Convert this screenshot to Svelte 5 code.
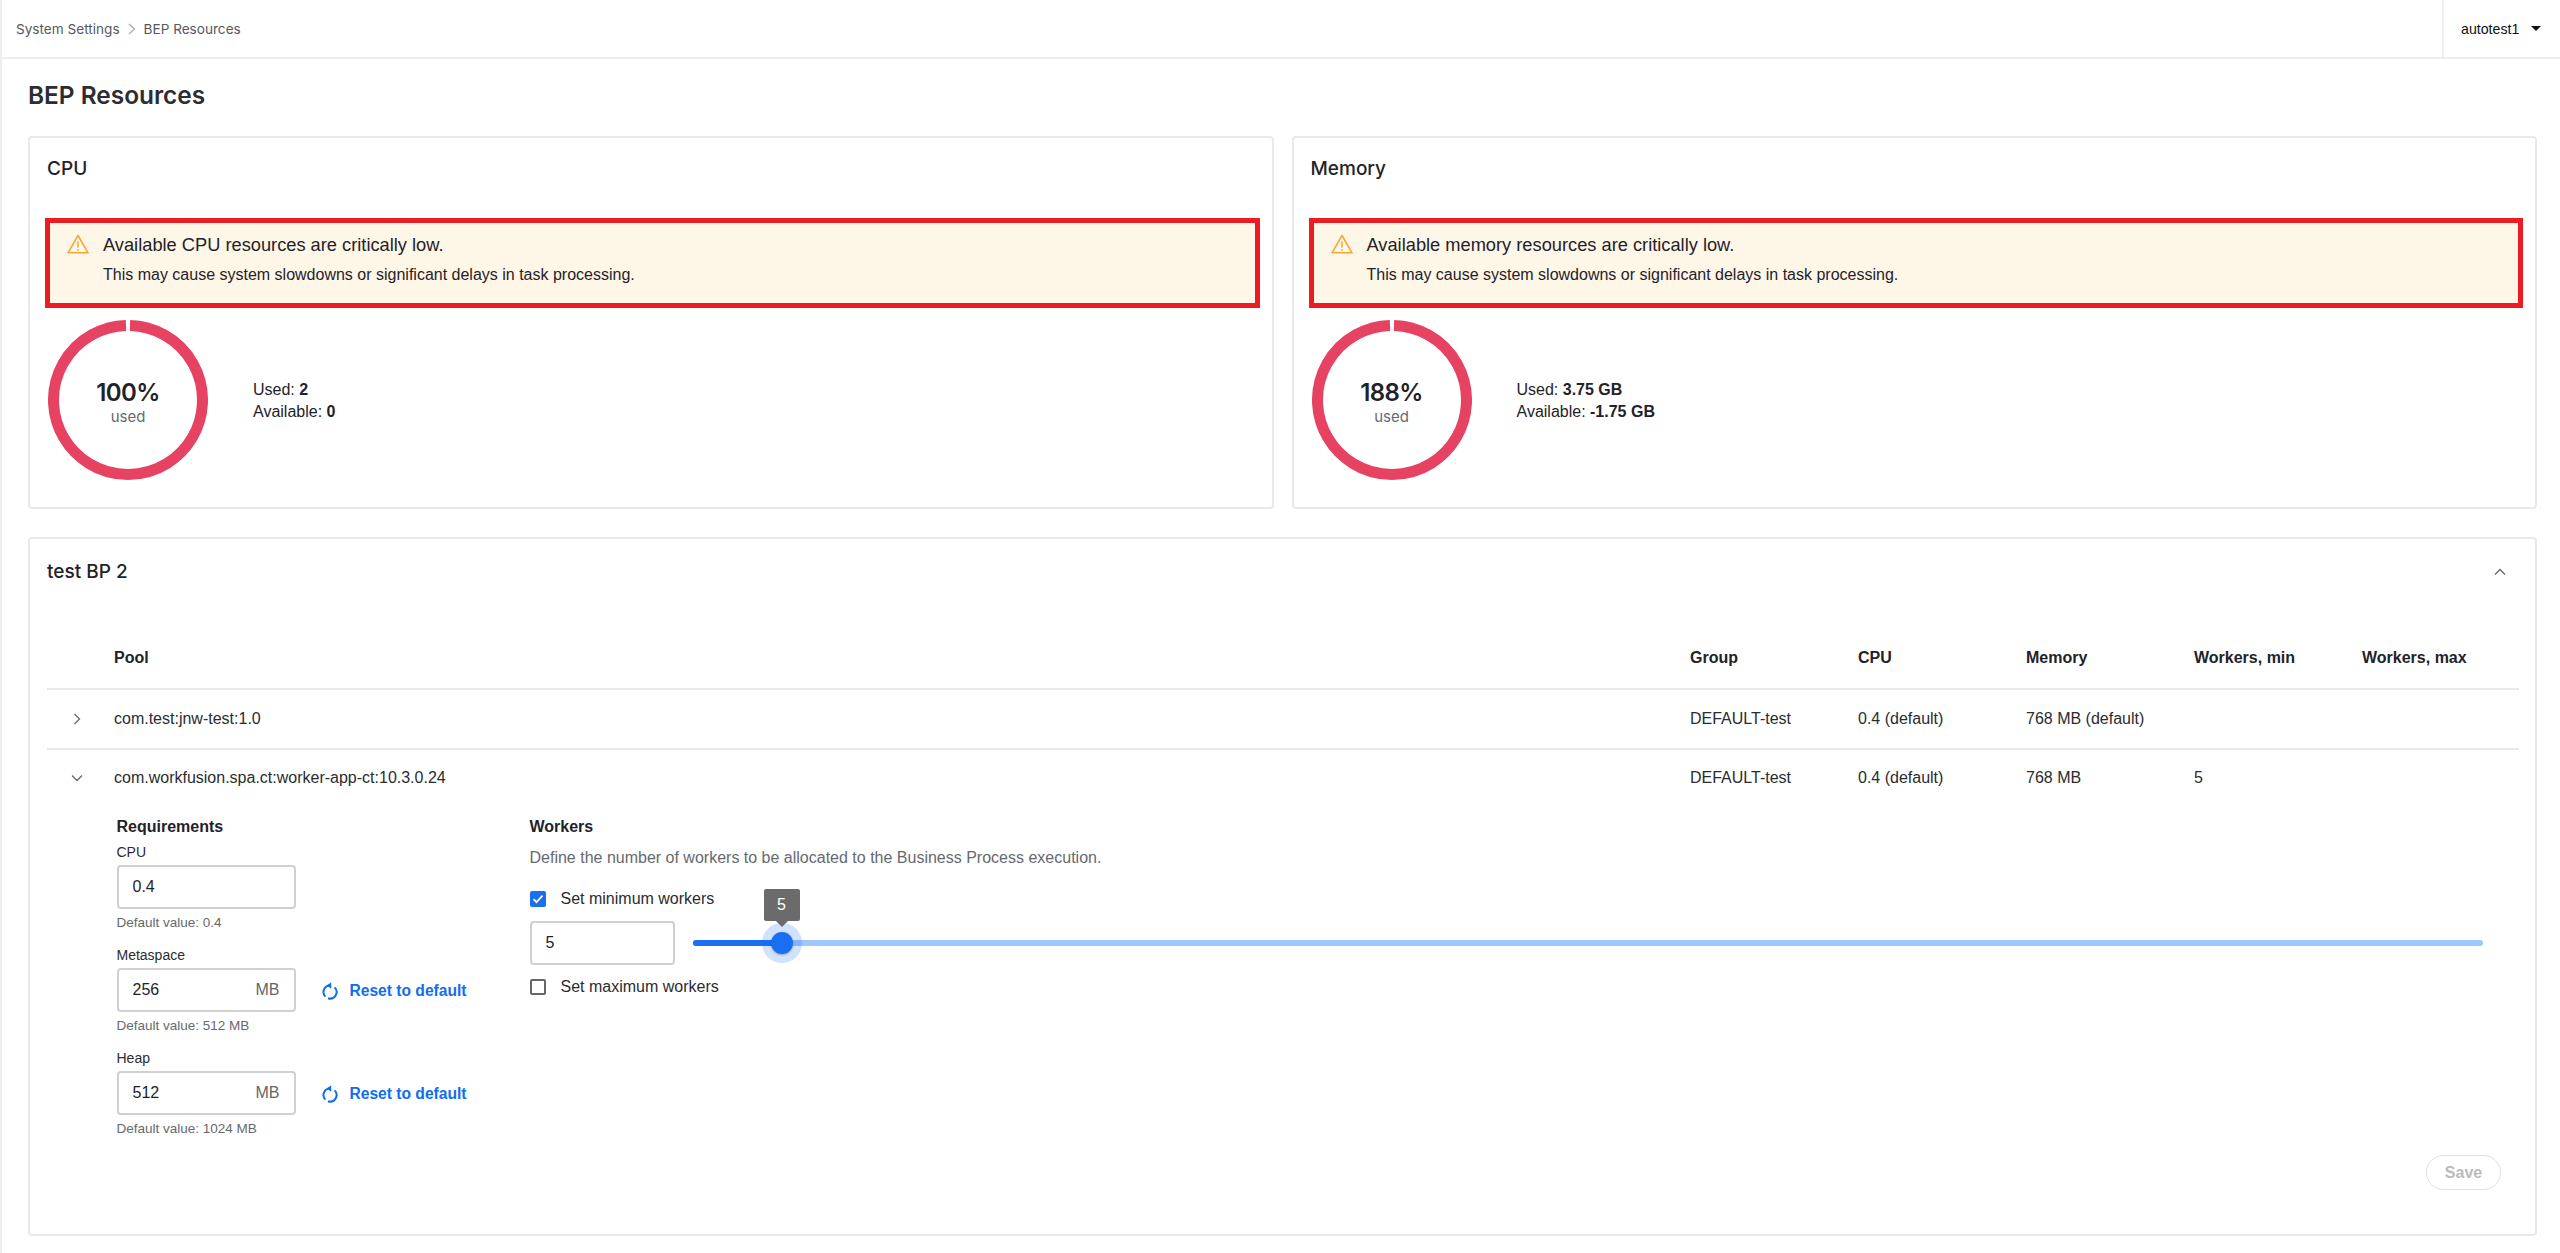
<script>
  const gauges = [
    { title: "CPU", word: "CPU", pct: "100%", used: "2", avail: "0" },
    { title: "Memory", word: "memory", pct: "188%", used: "3.75 GB", avail: "-1.75 GB" },
  ];
  const columns = ["Group", "CPU", "Memory", "Workers, min", "Workers, max"];
</script>

{#snippet resetIcon()}
  <svg width="16" height="22" viewBox="0 0 16 22">
    <path d="M8 5.5A6.5 6.5 0 0 0 3.4 16.6M6 18.2A6.5 6.5 0 0 0 12.6 7.4" fill="none" stroke="#0f6df0" stroke-width="2" />
    <path d="M9.2 2.2v6.6L4.8 5.5z" fill="#0f6df0" />
  </svg>
{/snippet}

<div class="page">
  <header class="topbar">
    <nav class="crumbs">
      <span>System Settings</span>
      <svg width="8" height="12" viewBox="0 0 8 12"><path d="M1 1l5.5 5-5.5 5" fill="none" stroke="#aaa" stroke-width="1.2" /></svg>
      <span>BEP Resources</span>
    </nav>
    <div class="user">
      <span>autotest1</span>
      <i class="caret"></i>
    </div>
  </header>

  <main>
    <h1>BEP Resources</h1>

    <div class="gauges">
      {#each gauges as g}
        <section class="card gauge">
          <h2>{g.title}</h2>
          <div class="alert">
            <svg class="warn" width="22" height="20" viewBox="0 0 22 20">
              <path d="M11 1.5L21 18.8H1z" fill="none" stroke="#f2a93b" stroke-width="1.6" stroke-linejoin="round" />
              <path d="M11 7.5v6M11 15v1.6" fill="none" stroke="#f2a93b" stroke-width="1.6" />
            </svg>
            <div>
              <p class="alert-title">Available {g.word} resources are critically low.</p>
              <p class="alert-text">This may cause system slowdowns or significant delays in task processing.</p>
            </div>
          </div>
          <div class="usage">
            <div class="ring">
              <svg width="160" height="160" viewBox="0 0 160 160">
                <path d="M82 5.5A74.5 74.5 0 1 1 78 5.5" fill="none" stroke="#e64261" stroke-width="11" />
              </svg>
              <div class="ring-label">
                <strong>{g.pct}</strong>
                <span>used</span>
              </div>
            </div>
            <div class="numbers">
              <div>Used: <b>{g.used}</b></div>
              <div>Available: <b>{g.avail}</b></div>
            </div>
          </div>
        </section>
      {/each}
    </div>

    <section class="card pool-card">
      <div class="pool-head">
        <h2>test BP 2</h2>
        <svg width="12" height="8" viewBox="0 0 12 8"><path d="M1 6.5l5-5 5 5" fill="none" stroke="#666" stroke-width="1.3" /></svg>
      </div>

      <div class="table">
        <div class="tr th">
          <span></span>
          <span>Pool</span>
          {#each columns as c}<span>{c}</span>{/each}
        </div>
        <div class="tr">
          <svg class="chev" width="8" height="12" viewBox="0 0 8 12"><path d="M1.5 1l5 5-5 5" fill="none" stroke="#666" stroke-width="1.3" /></svg>
          <span>com.test:jnw-test:1.0</span>
          <span>DEFAULT-test</span>
          <span>0.4 (default)</span>
          <span>768 MB (default)</span>
          <span></span>
          <span></span>
        </div>
        <div class="tr open">
          <svg class="chev" width="12" height="8" viewBox="0 0 12 8"><path d="M1 1.5l5 5 5-5" fill="none" stroke="#666" stroke-width="1.3" /></svg>
          <span>com.workfusion.spa.ct:worker-app-ct:10.3.0.24</span>
          <span>DEFAULT-test</span>
          <span>0.4 (default)</span>
          <span>768 MB</span>
          <span>5</span>
          <span></span>
        </div>

        <div class="details">
          <div class="requirements">
            <h3>Requirements</h3>
            <div class="field">
              <label for="cpu">CPU</label>
              <div class="input"><input id="cpu" value="0.4" /></div>
              <small>Default value: 0.4</small>
            </div>
            <div class="field">
              <label for="meta">Metaspace</label>
              <div class="with-reset">
                <div class="input"><input id="meta" value="256" /><span>MB</span></div>
                <button class="reset">
                  {@render resetIcon()}
                  Reset to default
                </button>
              </div>
              <small>Default value: 512 MB</small>
            </div>
            <div class="field">
              <label for="heap">Heap</label>
              <div class="with-reset">
                <div class="input"><input id="heap" value="512" /><span>MB</span></div>
                <button class="reset">
                  {@render resetIcon()}
                  Reset to default
                </button>
              </div>
              <small>Default value: 1024 MB</small>
            </div>
          </div>

          <div class="workers">
            <h3>Workers</h3>
            <p class="hint">Define the number of workers to be allocated to the Business Process execution.</p>
            <div class="check">
              <span class="box on">
                <svg width="16" height="16" viewBox="0 0 16 16"><path d="M3.5 8.2l3 3 6-6.5" fill="none" stroke="#fff" stroke-width="1.7" /></svg>
              </span>
              Set minimum workers
            </div>
            <div class="slider-row">
              <div class="input small"><input value="5" /></div>
              <div class="slider">
                <div class="fill"></div>
                <div class="halo"></div>
                <div class="thumb"></div>
                <div class="tip">5</div>
              </div>
            </div>
            <div class="check">
              <span class="box"></span>
              Set maximum workers
            </div>
          </div>
        </div>

        <div class="actions">
          <button class="save" disabled>Save</button>
        </div>
      </div>
    </section>
  </main>
</div>

<style>
  :global(body) {
    background: #fff;
    color: #1f2329;
    font-family: "Liberation Sans", Arial, sans-serif;
    font-size: 16px;
  }
  .page {
    border-left: 2px solid #eee;
    min-height: 1253px;
    box-sizing: border-box;
  }
  .topbar {
    height: 57px;
    border-bottom: 2px solid #eee;
    display: flex;
    justify-content: space-between;
    align-items: stretch;
  }
  .crumbs {
    display: flex;
    align-items: center;
    gap: 8px;
    padding-left: 14px;
    font-family: Inter, sans-serif;
    font-size: 13.6px;
    color: #55595f;
  }
  .user {
    width: 118px;
    border-left: 2px solid #eee;
    display: flex;
    align-items: center;
    padding-left: 17px;
    gap: 12px;
    font-size: 14.2px;
    color: #111;
    box-sizing: border-box;
  }
  .caret {
    border: 5px solid transparent;
    border-top-color: #111;
    border-bottom: 0;
  }
  main {
    padding: 0 23px 0 26px;
  }
  h1 {
    margin: 0;
    height: 77px;
    line-height: 72px;
    font-family: Inter, sans-serif;
    font-size: 24.4px;
    font-weight: 600;
    color: #2b2d31;
  }
  .card {
    border: 2px solid #e9e9e9;
    border-radius: 4px;
    box-sizing: border-box;
    background: #fff;
  }
  .gauges {
    display: grid;
    grid-template-columns: 1fr 1fr;
    gap: 18px;
  }
  .gauge {
    height: 373px;
    padding: 0 12px 0 15px;
  }
  h2 {
    margin: 0;
    font-family: Inter, sans-serif;
    font-size: 19px;
    font-weight: 500;
    color: #1f2329;
  }
  .gauge h2 {
    padding: 0 0 0 2px;
    height: 80px;
    line-height: 62px;
  }
  .alert {
    height: 90px;
    box-sizing: border-box;
    border: 5px solid #ed1c24;
    background: #fef6e7;
    display: flex;
    gap: 14px;
    padding: 11px 17px;
  }
  .warn {
    flex: none;
  }
  .alert p {
    margin: 0;
  }
  .alert-title {
    font-size: 18.25px;
    line-height: 22px;
  }
  .alert .alert-text {
    font-size: 16px;
    line-height: 20px;
    margin-top: 9px;
  }
  .usage {
    display: flex;
    gap: 45px;
    margin-top: 12px;
    padding-left: 3px;
  }
  .ring {
    position: relative;
    width: 160px;
    height: 160px;
  }
  .ring-label {
    position: absolute;
    left: 0;
    right: 0;
    top: 58px;
    display: flex;
    flex-direction: column;
    align-items: center;
  }
  .ring-label strong {
    font-family: Inter, sans-serif;
    font-size: 24px;
    font-weight: 600;
    line-height: 30px;
    letter-spacing: -0.6px;
  }
  .ring-label span {
    font-family: Inter, sans-serif;
    font-size: 15px;
    line-height: 18px;
    color: #666a70;
  }
  .numbers {
    padding-top: 59px;
    font-size: 16px;
    line-height: 22px;
  }
  .pool-card {
    margin-top: 28px;
    height: 699px;
    padding: 0 16px 0 17px;
  }
  .pool-head {
    height: 65px;
    display: flex;
    align-items: center;
    justify-content: space-between;
    padding-right: 13px;
  }
  .table {
    margin-top: 24px;
  }
  .tr {
    display: grid;
    grid-template-columns: 67px 1fr 168px 168px 168px 168px 157px;
    align-items: center;
    height: 60px;
    box-sizing: border-box;
    border-bottom: 2px solid #e9e9e9;
    font-size: 16px;
    color: #2a2c30;
  }
  .tr.th {
    height: 62px;
    font-weight: 700;
    color: #1f2329;
  }
  .tr.open {
    height: 56px;
    border-bottom: 0;
  }
  .chev {
    justify-self: center;
    margin-left: -8px;
  }
  .details {
    display: grid;
    grid-template-columns: 413px 1fr;
    padding-left: 69.5px;
    padding-right: 36px;
    margin-top: 10px;
  }
  h3 {
    margin: 0;
    font-size: 16px;
    line-height: 22px;
    font-weight: 700;
    color: #1f2329;
  }
  .field {
    margin-top: 6px;
    height: 103px;
    margin-bottom: -6px;
  }
  .field label {
    display: block;
    font-size: 14px;
    line-height: 16px;
    color: #2a2c30;
  }
  .input {
    margin-top: 5px;
    width: 179px;
    height: 44px;
    box-sizing: border-box;
    border: 2px solid #d0d0d0;
    border-radius: 4px;
    display: flex;
    align-items: center;
    padding: 0 14px;
    color: #666;
  }
  .input input {
    border: 0;
    outline: 0;
    padding: 0;
    flex: 1;
    min-width: 0;
    font: inherit;
    color: #1f2329;
    background: none;
  }
  .input.small {
    margin-top: 0;
    width: 145px;
  }
  small {
    display: block;
    margin-top: 5px;
    font-size: 13.5px;
    line-height: 18px;
    color: #66696e;
  }
  .with-reset {
    display: flex;
    align-items: center;
    gap: 26px;
  }
  .reset {
    display: flex;
    align-items: center;
    gap: 12px;
    margin-top: 6px;
    border: 0;
    background: none;
    padding: 0;
    font: inherit;
    font-size: 15.6px;
    font-weight: 700;
    color: #0f6df0;
  }
  .hint {
    margin: 9px 0 0;
    line-height: 22px;
    color: #66696e;
  }
  .check {
    display: flex;
    align-items: center;
    gap: 15px;
    height: 20px;
    color: #2a2c30;
  }
  .hint + .check {
    margin-top: 20px;
  }
  .box {
    width: 16px;
    height: 16px;
    box-sizing: border-box;
    border: 2px solid #666;
    border-radius: 2px;
  }
  .box.on {
    border: 0;
    background: #1a6ef0;
  }
  .box svg {
    display: block;
  }
  .slider-row {
    display: flex;
    align-items: center;
    gap: 18px;
    margin: 12px 0;
  }
  .slider {
    position: relative;
    flex: 1;
    height: 6px;
    border-radius: 3px;
    background: #a0c7fb;
  }
  .fill {
    width: 89px;
    height: 100%;
    border-radius: 3px;
    background: #1a6ef0;
  }
  .halo,
  .thumb,
  .tip {
    position: absolute;
    transform: translateX(-50%);
    left: 89px;
  }
  .halo {
    top: -17px;
    width: 40px;
    height: 40px;
    border-radius: 50%;
    background: rgba(26, 110, 240, 0.2);
  }
  .thumb {
    top: -8px;
    width: 22px;
    height: 22px;
    border-radius: 50%;
    background: #1a6ef0;
    box-shadow: 0 1px 2px rgba(0, 0, 0, 0.3);
  }
  .tip {
    top: -51px;
    width: 36px;
    height: 32px;
    line-height: 32px;
    text-align: center;
    font-size: 16px;
    color: #fff;
    background: #6b6b6b;
    border-radius: 2px;
  }
  .tip::after {
    content: "";
    position: absolute;
    left: 50%;
    top: 100%;
    margin-left: -6px;
    border: 6px solid transparent;
    border-top-color: #6b6b6b;
    border-bottom: 0;
  }
  .actions {
    display: flex;
    justify-content: flex-end;
    padding-right: 18px;
    margin-top: 8px;
  }
  .save {
    width: 75px;
    height: 35px;
    border: 1px solid #e0e0e0;
    border-radius: 18px;
    background: #fff;
    font: inherit;
    font-size: 16px;
    font-weight: 700;
    color: #bbb;
  }
</style>
